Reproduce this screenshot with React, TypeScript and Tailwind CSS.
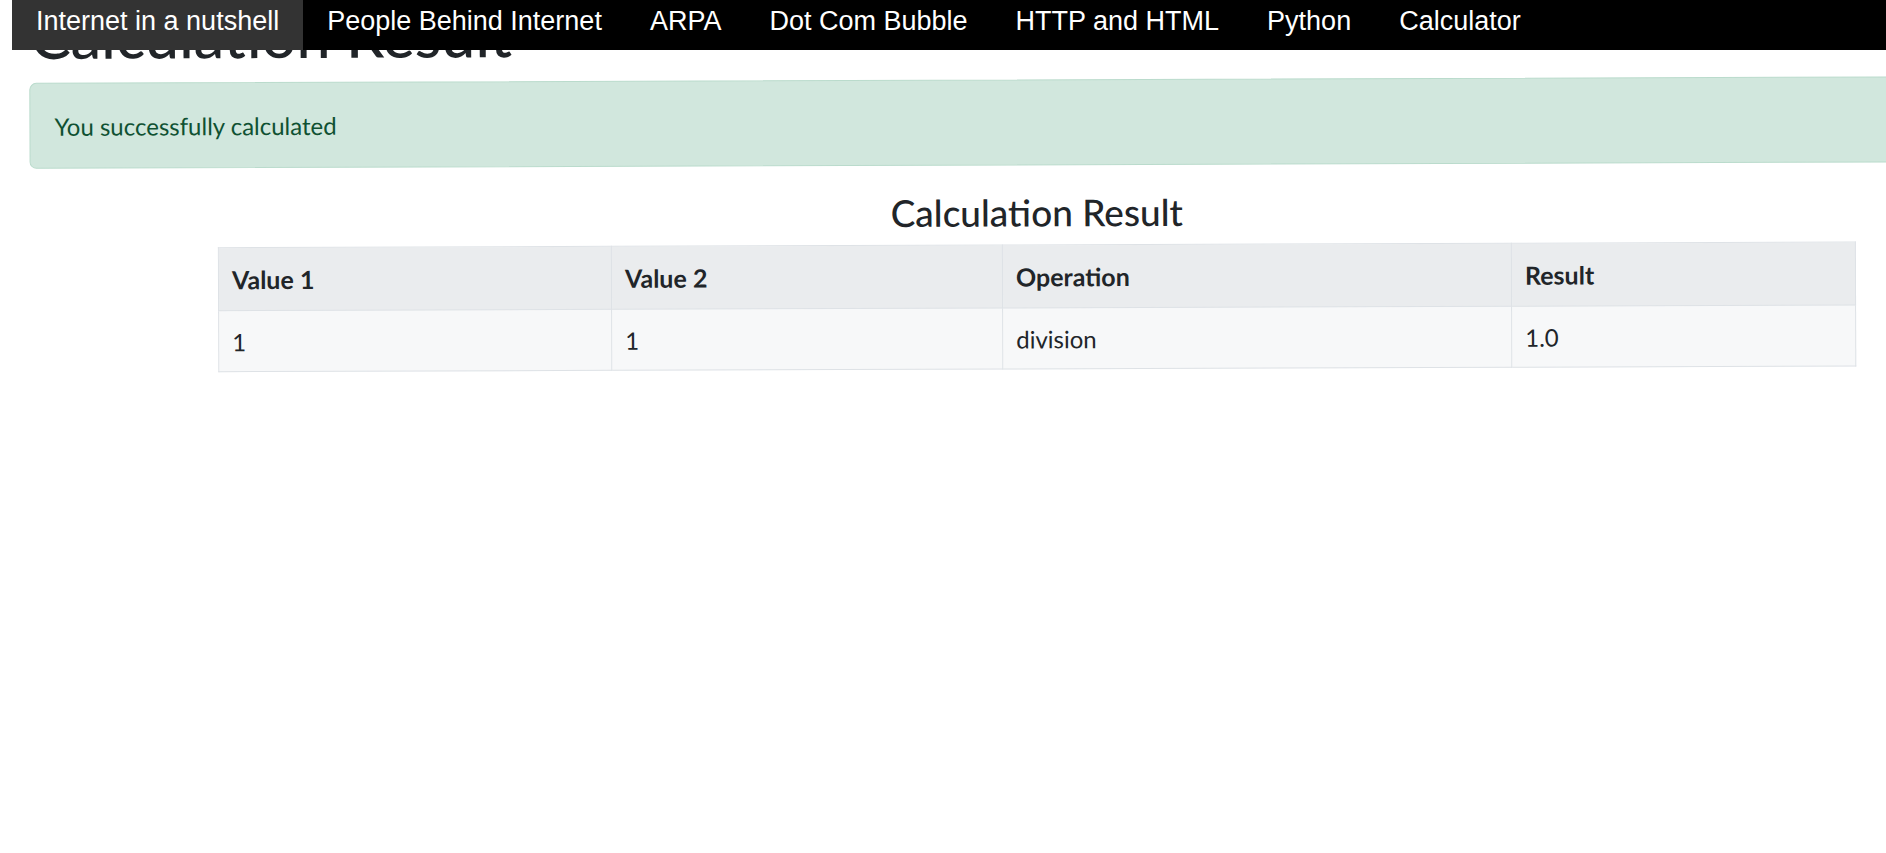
const navItems = [
  "Internet in a nutshell",
  "People Behind Internet",
  "ARPA",
  "Dot Com Bubble",
  "HTTP and HTML",
  "Python",
  "Calculator",
];

const rows = [{ value1: "1", value2: "1", operation: "division", result: "1.0" }];

function TopNav() {
  return (
    <nav className="absolute top-0 left-[12px] right-0 h-[50px] bg-black z-10 flex font-['Liberation_Sans',Arial,sans-serif]">
      {navItems.map((item, i) => (
        <a
          key={item}
          className={
            i === 0
              ? "h-full px-[24px] pt-[6px] text-[27px] leading-[31px] text-white bg-[#333333] whitespace-nowrap"
              : "h-full px-[24px] pt-[6px] text-[27px] leading-[31px] text-white whitespace-nowrap"
          }
        >
          {item}
        </a>
      ))}
    </nav>
  );
}

export default function App() {
  return (
    <div className="relative w-full h-[853px] overflow-hidden bg-white font-['Lato','Open_Sans',sans-serif] text-[#212529]">
      <TopNav />

      <div className="pl-[29px] pt-[4px] rotate-[-0.2deg] origin-top-left">
        {/* page title, mostly hidden under the fixed nav */}
        <h1 className="ml-[1px] text-[61px] leading-[64px] font-medium whitespace-nowrap">Calculation Result</h1>

        {/* success alert */}
        <div className="mt-[15px] w-[1880px] rounded-[7px] border border-[#badbcc] bg-[#d1e7dd] px-[24px] pt-[26px] pb-[25px] text-[24px] leading-[33px] text-[#0f5132]">
          You successfully calculated
        </div>

        <div className="ml-[188px] w-[1638px]">
          <h3 className="mt-[25px] text-center text-[37px] leading-[44px] font-medium">Calculation Result</h3>

          <table className="mt-[10px] w-full table-fixed border-collapse border border-[#dee2e6] text-[24px] leading-[33px]">
            <colgroup>
              <col className="w-[393px]" />
              <col className="w-[391px]" />
              <col className="w-[509px]" />
              <col />
            </colgroup>
            <thead>
              <tr className="h-[63px] bg-[#eaecee]">
                <th className="border border-[#dee2e6] pl-[13px] pt-[15px] align-top text-left text-[25px] font-bold">Value 1</th>
                <th className="border border-[#dee2e6] pl-[13px] pt-[15px] align-top text-left text-[25px] font-bold">Value 2</th>
                <th className="border border-[#dee2e6] pl-[13px] pt-[15px] align-top text-left text-[25px] font-bold">Operation</th>
                <th className="border border-[#dee2e6] pl-[13px] pt-[15px] align-top text-left text-[25px] font-bold">Result</th>
              </tr>
            </thead>
            <tbody>
              {rows.map((r, i) => (
                <tr key={i} className="h-[61px] bg-[#f7f8f9]">
                  <td className="border border-[#dee2e6] pl-[13px] pt-[14px] align-top">{r.value1}</td>
                  <td className="border border-[#dee2e6] pl-[13px] pt-[14px] align-top">{r.value2}</td>
                  <td className="border border-[#dee2e6] pl-[13px] pt-[14px] align-top">{r.operation}</td>
                  <td className="border border-[#dee2e6] pl-[13px] pt-[14px] align-top">{r.result}</td>
                </tr>
              ))}
            </tbody>
          </table>
        </div>
      </div>
    </div>
  );
}
